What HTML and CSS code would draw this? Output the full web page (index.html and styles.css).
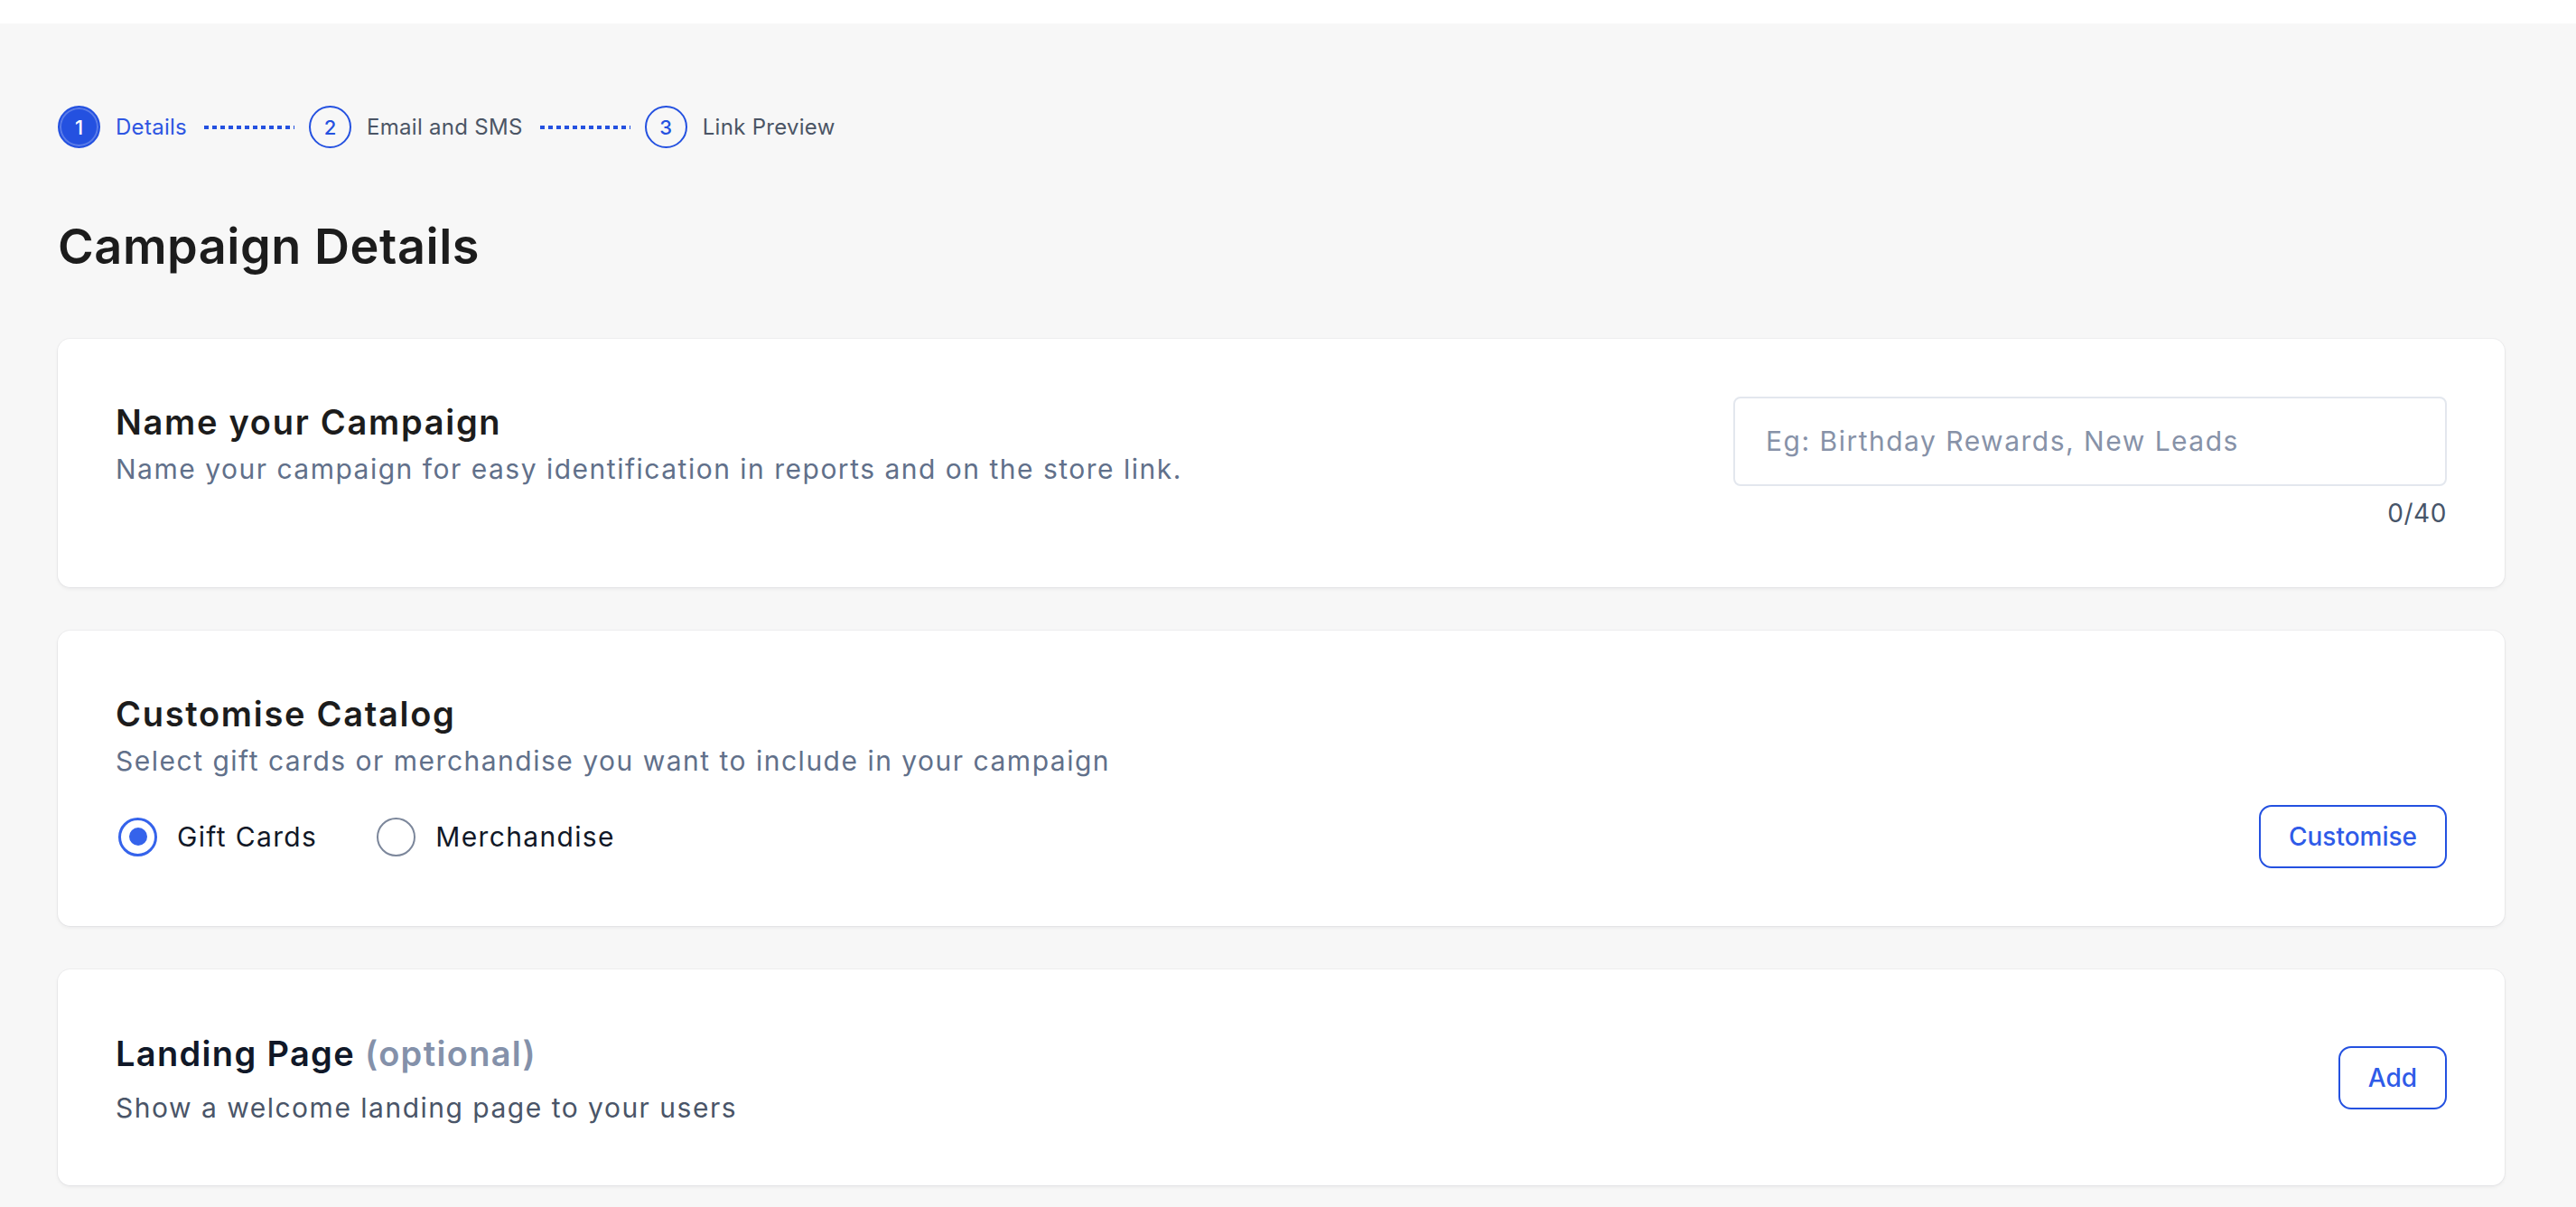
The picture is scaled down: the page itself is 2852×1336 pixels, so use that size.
FILE: index.html
```html
<!DOCTYPE html>
<html lang="en">
<head>
    <meta charset="UTF-8">
    <meta name="viewport" content="width=device-width, initial-scale=1.0">
    <title>Campaign Details</title>
    <link rel="stylesheet" href="styles.css">
</head>
<body>
    <div class="topbar"></div>

    <main class="page">
        <!-- steps -->
        <div class="stepper">
            <div class="step active">
                <span class="step-num">1</span>
                <span class="step-label">Details</span>
            </div>
            <span class="step-line"></span>
            <div class="step">
                <span class="step-num">2</span>
                <span class="step-label">Email and SMS</span>
            </div>
            <span class="step-line"></span>
            <div class="step">
                <span class="step-num">3</span>
                <span class="step-label">Link Preview</span>
            </div>
        </div>

        <h1 class="page-title">Campaign Details</h1>

        <!-- name -->
        <section class="card card-name">
            <div class="card-text">
                <h2 class="card-title">Name your Campaign</h2>
                <p class="card-desc">Name your campaign for easy identification in reports and on the store link.</p>
            </div>
            <div class="name-field">
                <input type="text" class="text-input" placeholder="Eg: Birthday Rewards, New Leads">
                <div class="counter">0/40</div>
            </div>
        </section>

        <!-- catalog -->
        <section class="card card-catalog">
            <h2 class="card-title">Customise Catalog</h2>
            <p class="card-desc">Select gift cards or merchandise you want to include in your campaign</p>
            <div class="catalog-row">
                <div class="radio-group">
                    <label class="radio">
                        <span class="radio-mark checked"></span>
                        Gift Cards
                    </label>
                    <label class="radio">
                        <span class="radio-mark"></span>
                        Merchandise
                    </label>
                </div>
                <button class="outline-btn">Customise</button>
            </div>
        </section>

        <!-- landing page -->
        <section class="card card-landing">
            <div class="card-text">
                <h2 class="card-title dark">Landing Page <span class="optional">(optional)</span></h2>
                <p class="card-desc darker">Show a welcome landing page to your users</p>
            </div>
            <button class="outline-btn">Add</button>
        </section>
    </main>
</body>
</html>
```
FILE: styles.css
```css
* {
    margin: 0;
    padding: 0;
    box-sizing: border-box;
}

body {
    background-color: #f7f7f7;
    font-family: Inter, "Noto Sans", Arial, sans-serif;
    color: #1c1c1c;
    overflow: hidden;
}

.topbar {
    height: 26px;
    background-color: #ffffff;
}

.page {
    padding: 91px 79px 0 64px;
}

/* steps */
.stepper {
    display: flex;
    align-items: center;
}

.step {
    display: flex;
    align-items: center;
    gap: 17px;
}

.step-num {
    display: flex;
    align-items: center;
    justify-content: center;
    width: 47px;
    height: 47px;
    border: 2px solid #2451e0;
    border-radius: 50%;
    color: #2451e0;
    font-size: 22px;
    font-weight: 500;
}

.step.active .step-num {
    background-color: #2451e0;
    color: #ffffff;
    box-shadow: inset 0 0 0 2px rgba(255, 255, 255, 0.25);
}

.step-label {
    font-size: 24px;
    letter-spacing: 0.012em;
    color: #4b5565;
}

.step.active .step-label {
    color: #2e56e2;
}

.step-line {
    width: 100px;
    height: 4px;
    margin: 0 16px 0 19px;
    background: repeating-linear-gradient(to right, #2451e0 0 5px, transparent 5px 9px);
}

.page-title {
    margin: 77px 0 69px;
    font-size: 54px;
    font-weight: 600;
    line-height: 1.2;
    letter-spacing: 0.01em;
    color: #1c1c1c;
}

/* cards */
.card {
    background-color: #ffffff;
    border-radius: 14px;
    padding: 64px;
    margin-bottom: 48px;
    box-shadow: 0 0 0 1px rgba(15, 23, 42, 0.04), 0 2px 4px rgba(15, 23, 42, 0.06);
}

.card-name {
    display: flex;
    justify-content: space-between;
    align-items: flex-start;
}

.card-landing {
    display: flex;
    justify-content: space-between;
    align-items: center;
    padding: 65px 64px;
}

.card-title {
    font-size: 38px;
    font-weight: 600;
    line-height: 1.5;
    letter-spacing: 0.045em;
    color: #1c1c1c;
}

.card-title.dark {
    color: #101828;
    letter-spacing: 0.035em;
}

.optional {
    color: #8491aa;
}

.card-desc {
    margin-top: 2px;
    font-size: 30px;
    line-height: 1.4;
    letter-spacing: 0.05em;
    color: #61708a;
}

.card-desc.darker {
    margin-top: 10px;
    color: #4a5568;
}

/* name input */
.name-field {
    width: 790px;
}

.text-input {
    width: 100%;
    height: 99px;
    padding: 0 34px;
    border: 2px solid #e3e7ee;
    border-radius: 8px;
    font-family: inherit;
    font-size: 30px;
    letter-spacing: 0.05em;
    color: #1c1c1c;
    outline: none;
}

.text-input::placeholder {
    color: #8792a8;
}

.counter {
    margin-top: 12px;
    text-align: right;
    font-size: 28px;
    line-height: 1.3;
    letter-spacing: 0.02em;
    color: #475569;
}

/* catalog */
.catalog-row {
    display: flex;
    justify-content: space-between;
    align-items: center;
    margin-top: 28px;
}

.radio-group {
    display: flex;
    align-items: center;
    gap: 66px;
    padding-left: 3px;
}

.radio {
    display: flex;
    align-items: center;
    gap: 22px;
    font-size: 30px;
    letter-spacing: 0.045em;
    color: #111827;
    cursor: pointer;
}

.radio-mark {
    position: relative;
    width: 43px;
    height: 43px;
    border: 2.5px solid #7c879b;
    border-radius: 50%;
}

.radio-mark.checked {
    border: 3px solid #3563eb;
}

.radio-mark.checked::after {
    content: "";
    position: absolute;
    top: 8.5px;
    left: 8.5px;
    width: 20px;
    height: 20px;
    border-radius: 50%;
    background-color: #3563eb;
}

/* buttons */
.outline-btn {
    height: 70px;
    padding: 0 31px;
    background-color: #ffffff;
    border: 2.5px solid #2451e0;
    border-radius: 14px;
    font-family: inherit;
    font-size: 28px;
    font-weight: 500;
    color: #2f5be8;
    cursor: pointer;
}
```
